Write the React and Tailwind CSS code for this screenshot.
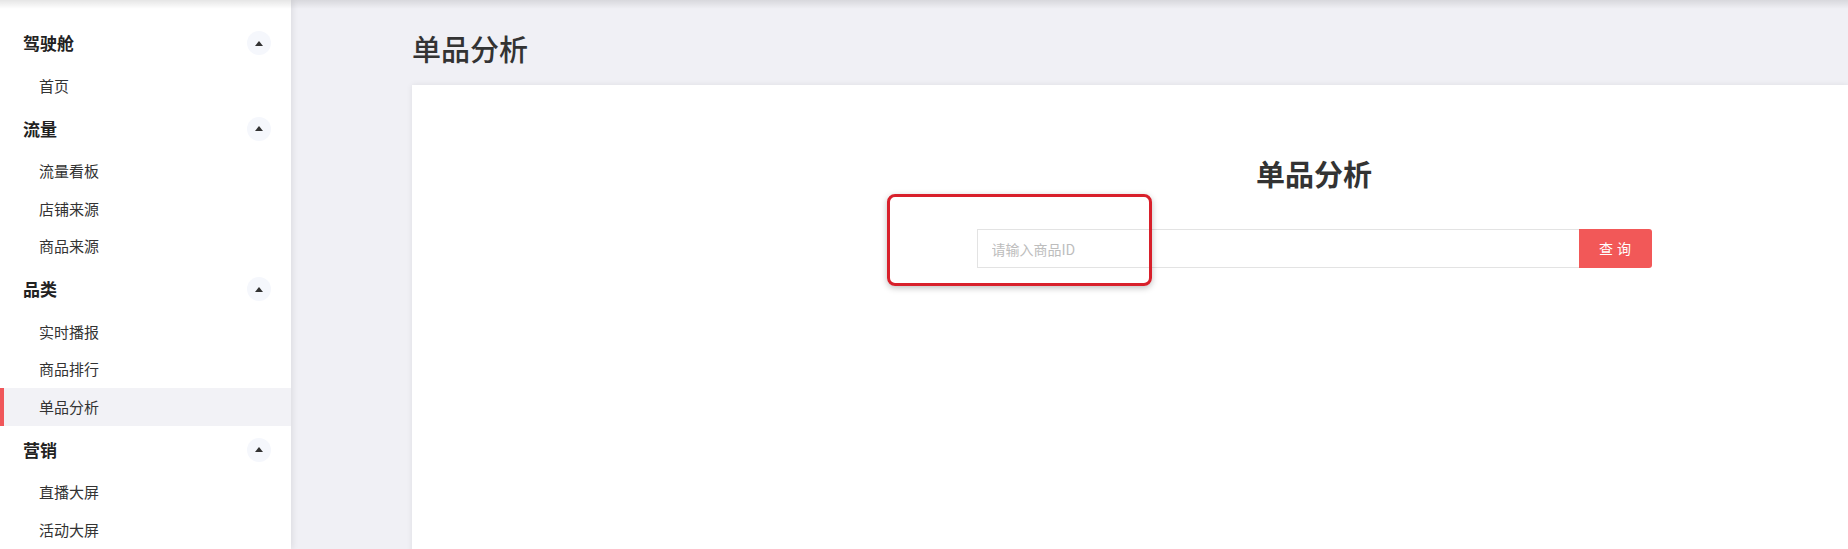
const menu = [
    { title: '驾驶舱', items: ['首页'] },
    { title: '流量', items: ['流量看板', '店铺来源', '商品来源'] },
    { title: '品类', items: ['实时播报', '商品排行', '单品分析'] },
    { title: '营销', items: ['直播大屏', '活动大屏'] },
];

const font = { fontFamily: '"Noto Sans CJK SC", "Noto Sans", sans-serif' };

function Sidebar({ active }) {
    return (
        <aside className="w-[291px] shrink-0 bg-white pt-[19px] shadow-[2px_0_6px_rgba(0,0,0,0.08)] relative z-10">
            {menu.map((group) => (
                <div key={group.title}>
                    <div className="h-[48px] flex items-center justify-between pl-[23px] pr-[20px]">
                        <span className="text-[17px] font-bold text-[#222]">{group.title}</span>
                        <span className="w-[24px] h-[24px] rounded-full bg-[#f5f7fc] flex items-center justify-center">
                            <span className="w-0 h-0 border-l-[4px] border-r-[4px] border-b-[5px] border-l-transparent border-r-transparent border-b-[#333]"></span>
                        </span>
                    </div>
                    {group.items.map((item) => (
                        <div
                            key={item}
                            className={`h-[37.5px] flex items-center pl-[39px] text-[15px] text-[#333] relative ${item === active ? 'bg-[#f2f2f6]' : ''}`}
                        >
                            {item === active && (
                                <span className="absolute left-0 top-0 bottom-0 w-[4px] bg-[#f0575a]"></span>
                            )}
                            {item}
                        </div>
                    ))}
                </div>
            ))}
        </aside>
    );
}

export default function App() {
    return (
        <div className="relative w-[1848px] h-[549px] overflow-hidden flex bg-[#f0f0f5]" style={font}>
            <div className="pointer-events-none absolute inset-x-0 top-0 h-[9px] bg-gradient-to-b from-black/10 to-transparent z-20"></div>
            <Sidebar active="单品分析" />
            <main className="flex-1 min-w-0 pl-[121px] pt-[28px]">
                <h1 className="h-[40px] leading-[40px] text-[29px] font-medium text-[#333]">单品分析</h1>
                <div className="mt-[17px] h-[600px] bg-white shadow-[0_0_6px_rgba(0,0,0,0.08)] overflow-hidden">
                    <div className="w-[1804px] flex flex-col items-center pt-[68px]">
                        <h2 className="h-[40px] leading-[40px] text-[29px] font-bold text-[#333]">单品分析</h2>
                        <div className="relative mt-[36px] flex w-[675px] h-[39px]">
                            <input
                                type="text"
                                placeholder="请输入商品ID"
                                className="flex-1 h-full border border-[#e3e3e3] border-r-0 pl-[14px] text-[14px] text-[#333] placeholder:text-[#bdbdbd] outline-none"
                                style={font}
                            />
                            <button className="w-[73px] h-full bg-[#f25858] rounded-r-[3px] text-white text-[14px] tracking-[4px] pl-[4px]">
                                查询
                            </button>
                            <div className="pointer-events-none absolute left-[-90px] top-[-35px] w-[265px] h-[92px] border-[3px] border-[#d8202b] rounded-[8px] shadow-[0_2px_6px_rgba(0,0,0,0.25)]"></div>
                        </div>
                    </div>
                </div>
            </main>
        </div>
    );
}
